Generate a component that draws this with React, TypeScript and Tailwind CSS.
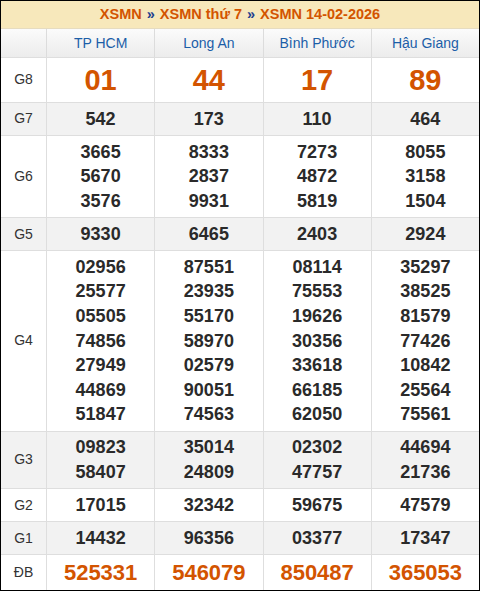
const provinces = ['TP HCM', 'Long An', 'Bình Phước', 'Hậu Giang'];

type Row = { label: string; values: string[][]; kind?: 'g8' | 'db' };

const rows: Row[] = [
  { label: 'G8', kind: 'g8', values: [['01'], ['44'], ['17'], ['89']] },
  { label: 'G7', values: [['542'], ['173'], ['110'], ['464']] },
  {
    label: 'G6',
    values: [
      ['3665', '5670', '3576'],
      ['8333', '2837', '9931'],
      ['7273', '4872', '5819'],
      ['8055', '3158', '1504'],
    ],
  },
  { label: 'G5', values: [['9330'], ['6465'], ['2403'], ['2924']] },
  {
    label: 'G4',
    values: [
      ['02956', '25577', '05505', '74856', '27949', '44869', '51847'],
      ['87551', '23935', '55170', '58970', '02579', '90051', '74563'],
      ['08114', '75553', '19626', '30356', '33618', '66185', '62050'],
      ['35297', '38525', '81579', '77426', '10842', '25564', '75561'],
    ],
  },
  {
    label: 'G3',
    values: [
      ['09823', '58407'],
      ['35014', '24809'],
      ['02302', '47757'],
      ['44694', '21736'],
    ],
  },
  { label: 'G2', values: [['17015'], ['32342'], ['59675'], ['47579']] },
  { label: 'G1', values: [['14432'], ['96356'], ['03377'], ['17347']] },
  { label: 'ĐB', kind: 'db', values: [['525331'], ['546079'], ['850487'], ['365053']] },
];

export default function App() {
  return (
    <div className="w-[480px] h-[591px] bg-white" style={{ fontFamily: '"Liberation Sans", Arial, sans-serif' }}>
      <div className="border border-black">
        {/* Title bar */}
        <div className="h-[28px] bg-[#f7e8bb] flex items-center justify-center text-[14.5px] font-bold text-[#d35400] border-b border-[#e6dcc0]">
          <span>XSMN</span>
          <span className="text-[#1d3f8f] mx-[5px]">»</span>
          <span>XSMN thứ 7</span>
          <span className="text-[#1d3f8f] mx-[5px]">»</span>
          <span>XSMN 14-02-2026</span>
        </div>

        {/* Province header */}
        <div className="grid grid-cols-[45px_1fr_1fr_1fr_1fr] h-[28px] bg-gradient-to-b from-[#fbfbfb] to-[#ececec]">
          <div />
          {provinces.map((p) => (
            <div key={p} className="border-l border-[#dcdcdc] flex items-center justify-center text-[14px] text-[#1b5ea8]">
              {p}
            </div>
          ))}
        </div>

        {rows.map((row, i) => {
          const gray = i % 2 === 1;
          return (
            <div
              key={row.label}
              className={`grid grid-cols-[45px_1fr_1fr_1fr_1fr] border-t border-[#dedede] ${gray ? 'bg-[#f2f2f2]' : 'bg-white'}`}
            >
              <div className="flex items-center justify-center text-[14px] text-[#333]">{row.label}</div>
              {row.values.map((vals, j) => (
                <div key={j} className="border-l border-[#dedede] flex flex-col items-center justify-center py-[3.7px]">
                  {vals.map((v, k) =>
                    row.kind === 'g8' ? (
                      <span key={k} className="text-[29px] leading-[36.6px] font-bold text-[#d35400]">
                        {v}
                      </span>
                    ) : row.kind === 'db' ? (
                      <span key={k} className="text-[22px] leading-[27.6px] font-bold text-[#d35400]">
                        {v}
                      </span>
                    ) : (
                      <span key={k} className="text-[18px] leading-[24.6px] font-bold text-[#2a2a2a]">
                        {v}
                      </span>
                    )
                  )}
                </div>
              ))}
            </div>
          );
        })}
      </div>
    </div>
  );
}
